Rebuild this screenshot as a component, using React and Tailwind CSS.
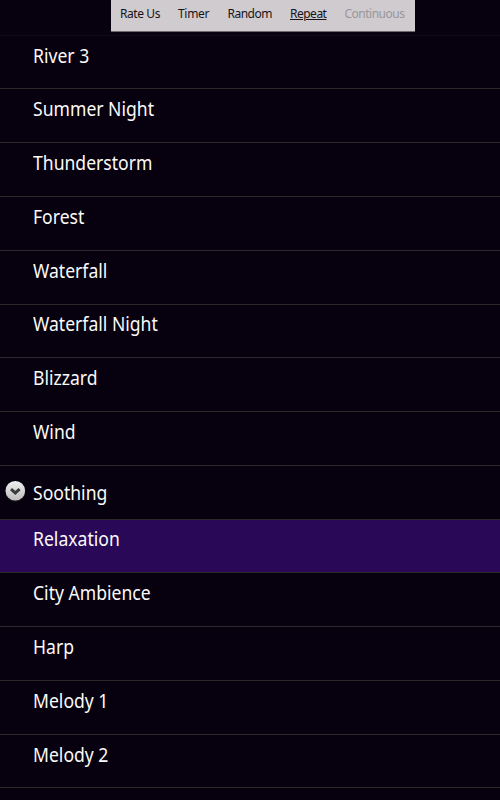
import React, { useState } from "react";

const menuItems = [
  { label: "Rate Us", className: "w-[58px] tracking-[-0.42px] text-[#171419]" },
  { label: "Timer", className: "w-[49.5px] tracking-[-0.3px] text-[#171419]" },
  { label: "Random", className: "w-[62.5px] tracking-[-0.5px] text-[#171419]" },
  { label: "Repeat", className: "w-[54.5px] tracking-[-0.5px] text-[#171419]", underline: true },
  { label: "Continuous", className: "tracking-[-0.5px] text-[#99969a]" },
];

const sounds = [
  { name: "River 3" },
  { name: "Summer Night" },
  { name: "Thunderstorm" },
  { name: "Forest" },
  { name: "Waterfall" },
  { name: "Waterfall Night" },
  { name: "Blizzard" },
  { name: "Wind" },
  { name: "Soothing", group: true },
  { name: "Relaxation" },
  { name: "City Ambience" },
  { name: "Harp" },
  { name: "Melody 1" },
  { name: "Melody 2" },
  { name: "" },
];

const GroupIcon = () => (
  <svg className="w-[22px] h-[24px]" viewBox="0 0 22 24">
    <defs>
      <linearGradient id="knob" x1="0" y1="0" x2="0" y2="1">
        <stop offset="0" stopColor="#f0f0f0" />
        <stop offset="1" stopColor="#bdbdbd" />
      </linearGradient>
    </defs>
    <circle cx="11.3" cy="12" r="9.8" fill="#1b181d" />
    <circle cx="11.3" cy="10.8" r="9.8" fill="url(#knob)" />
    <path d="M7 9.2 L11.3 12.9 L15.6 9.2" fill="none" stroke="#3b3b3b" strokeWidth="3" />
  </svg>
);

const SoundRow = ({ sound, selected, onSelect }) => (
  <li
    onClick={() => onSelect(sound.name)}
    className={`flex h-[53.77px] shrink-0 border-b border-[#29292b] pl-1 ${
      selected ? "bg-[#2a0858]" : ""
    }`}
  >
    <div className="w-[29px] shrink-0 pt-[14px]">{sound.group && <GroupIcon />}</div>
    <span
      className={`origin-left scale-x-[0.925] text-[19px] leading-[26px] whitespace-nowrap text-[#fafaf8] ${
        sound.group ? "pt-[14.3px]" : "pt-[6.9px]"
      }`}
    >
      {sound.name}
    </span>
  </li>
);

const App = () => {
  const [selected, setSelected] = useState("Relaxation");

  return (
    <div className="flex h-screen w-full flex-col overflow-hidden bg-[#07000f] font-['Noto_Sans',sans-serif]">
      <header className="flex h-[35.7px] shrink-0 items-start border-b border-[#110c18]">
        <nav className="ml-[111px] flex h-8 w-[304px] border-b border-[#6d6a6e] bg-[#cfcbcf] pl-[9px] pt-[5px] text-[12px] leading-[17px] whitespace-nowrap">
          {menuItems.map((item) => (
            <div key={item.label} className={`shrink-0 ${item.className}`}>
              <span className={item.underline ? "underline decoration-1 underline-offset-1" : ""}>
                {item.label}
              </span>
            </div>
          ))}
        </nav>
      </header>
      <ul className="flex flex-col">
        {sounds.map((sound) => (
          <SoundRow
            key={sound.name}
            sound={sound}
            selected={sound.name === selected}
            onSelect={setSelected}
          />
        ))}
      </ul>
    </div>
  );
};

export default App;
